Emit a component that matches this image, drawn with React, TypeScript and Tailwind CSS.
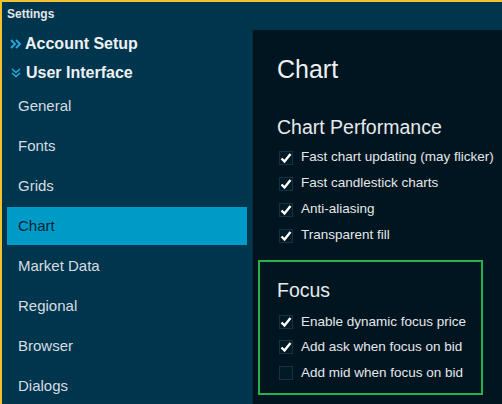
const navItems = ["General", "Fonts", "Grids", "Chart", "Market Data", "Regional", "Browser", "Dialogs"];

const perf = [
  { label: "Fast chart updating (may flicker)", checked: true },
  { label: "Fast candlestick charts", checked: true },
  { label: "Anti-aliasing", checked: true },
  { label: "Transparent fill", checked: true },
];

const focus = [
  { label: "Enable dynamic focus price", checked: true },
  { label: "Add ask when focus on bid", checked: true },
  { label: "Add mid when focus on bid", checked: false },
];

function CheckRow({ label, checked }: { label: string; checked: boolean }) {
  return (
    <div className="flex items-center h-[26px]">
      <span className="w-[14px] h-[14px] border border-[#0f3444] bg-[#011a26] flex items-center justify-center mr-[8px]">
        {checked && (
          <svg width="12" height="12" viewBox="0 0 12 12">
            <path d="M1.5 6.5 L4.5 9.5 L10.5 2" fill="none" stroke="#ffffff" strokeWidth="2.4" />
          </svg>
        )}
      </span>
      <span className="text-[13.5px] text-[#e4e8ea]">{label}</span>
    </div>
  );
}

export default function App() {
  return (
    <div
      className="w-[502px] h-[404px] overflow-hidden bg-[#00354e] border-t-2 border-l-2 border-[#f2c12e] flex flex-col"
      style={{ fontFamily: '"Liberation Sans", Arial, sans-serif' }}
    >
      {/* Title */}
      <div className="h-[28px] shrink-0 pl-[5px] pt-[6px] text-[12px] font-bold text-[#e2e6e8] leading-none">Settings</div>

      <div className="flex flex-1 min-h-0">
        {/* Sidebar */}
        <div className="w-[250px] flex flex-col">
          <div className="h-[28px] shrink-0 flex items-center pl-[8px]">
            <svg width="12" height="10" viewBox="0 0 12 10" className="mr-[3px]">
              <path d="M1 1 L5 5 L1 9 M6 1 L10 5 L6 9" fill="none" stroke="#2aa8e0" strokeWidth="1.8" />
            </svg>
            <span className="text-[16px] font-bold text-[#eef1f2]">Account Setup</span>
          </div>
          <div className="h-[29px] shrink-0 flex items-center pl-[9px]">
            <svg width="10" height="10" viewBox="0 0 10 10" className="mr-[5px]">
              <path d="M1 1 L5 4.5 L9 1 M1 5 L5 8.5 L9 5" fill="none" stroke="#2aa8e0" strokeWidth="1.6" />
            </svg>
            <span className="text-[16px] font-bold text-[#eef1f2]">User Interface</span>
          </div>
          {navItems.map((item) => (
            <div key={item} className="h-[40px] shrink-0 flex items-start px-[5px]">
              <div
                className={`h-[38px] w-full flex items-center pl-[11px] text-[15px] ${
                  item === "Chart" ? "bg-[#009ac7] text-[#002536]" : "text-[#d7dde0]"
                }`}
              >
                {item}
              </div>
            </div>
          ))}
        </div>

        {/* Content panel */}
        <div className="flex-1 bg-[#011520] border-l border-[#0b2c3c] pl-[24px] pt-[27px]">
          <div className="text-[25px] text-[#eef1f2] leading-none h-[38px]">Chart</div>
          <div className="mt-[23px] text-[19.5px] text-[#e6eaec] leading-none mb-[7px]">Chart Performance</div>
          <div className="pl-[2px]">
            {perf.map((p) => (
              <CheckRow key={p.label} {...p} />
            ))}
          </div>

          <div className="mt-[11px] ml-[-19px] w-[225px] h-[135px] border-2 border-[#26b24a] pl-[17px] pt-[19px]">
            <div className="text-[19.5px] text-[#e6eaec] leading-none mb-[9px]">Focus</div>
            <div className="pl-[2px]">
              {focus.map((p) => (
                <div key={p.label} className="h-[25.5px] flex items-center">
                  <CheckRow {...p} />
                </div>
              ))}
            </div>
          </div>
        </div>
      </div>
    </div>
  );
}
